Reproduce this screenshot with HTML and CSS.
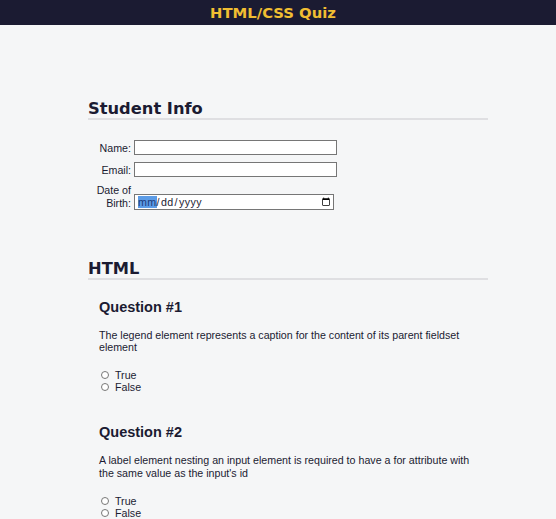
FILE: index.html
```html
<!DOCTYPE html>
<html lang="en">
<head>
<meta charset="utf-8">
<title>Accessibility Quiz</title>
<link rel="stylesheet" href="styles.css">
</head>
<body>
<header class="site-header">
  <h1 class="site-title">HTML/CSS Quiz</h1>
</header>
<main class="quiz">
  <section class="section">
    <h2 class="section-title">Student Info</h2>
    <div class="info">
      <div class="info-row">
        <label class="info-label" for="student-name">Name:</label>
        <input class="info-input" type="text" id="student-name">
      </div>
      <div class="info-row">
        <label class="info-label" for="student-email">Email:</label>
        <input class="info-input" type="email" id="student-email">
      </div>
      <div class="info-row">
        <label class="info-label" for="birth-date">Date of Birth:</label>
        <input class="info-input info-date" type="date" id="birth-date">
      </div>
    </div>
  </section>
  <section class="section section-html">
    <h2 class="section-title">HTML</h2>
    <div class="question">
      <h3 class="question-title">Question #1</h3>
      <p class="question-text">The legend element represents a caption for the content of its parent fieldset element</p>
      <ul class="answers">
        <li class="answer"><input class="radio" type="radio" name="q1" id="q1-a"><label for="q1-a">True</label></li>
        <li class="answer"><input class="radio" type="radio" name="q1" id="q1-b"><label for="q1-b">False</label></li>
      </ul>
    </div>
    <div class="question question-next">
      <h3 class="question-title">Question #2</h3>
      <p class="question-text">A label element nesting an input element is required to have a for attribute with the same value as the input's id</p>
      <ul class="answers">
        <li class="answer"><input class="radio" type="radio" name="q2" id="q2-a"><label for="q2-a">True</label></li>
        <li class="answer"><input class="radio" type="radio" name="q2" id="q2-b"><label for="q2-b">False</label></li>
      </ul>
    </div>
  </section>
</main>
</body>
</html>
```
FILE: styles.css
```css
html, body {
  margin: 0;
  padding: 0;
}

body {
  background: #f5f6f7;
  color: #1b1b32;
  font-family: "Liberation Sans", Arial, sans-serif;
  font-size: 10.67px;
}

.site-header {
  height: 25px;
  background-color: #1b1b32;
  padding-right: 10px;
  display: flex;
  align-items: center;
  justify-content: center;
}

.site-title {
  margin: 0;
  color: #f1be32;
  font-family: Verdana, "DejaVu Sans", sans-serif;
  font-size: 14.8px;
  line-height: 25px;
  font-weight: bold;
}

.quiz {
  padding-top: 74px;
}

.section {
  width: 400px;
  margin-left: 88px;
}

.section-html {
  margin-top: 49px;
}

.section-title {
  margin: 0;
  font-family: Verdana, "DejaVu Sans", sans-serif;
  font-size: 16.3px;
  line-height: 19px;
  font-weight: bold;
  border-bottom: 2px solid #dfdfe2;
}

.info {
  margin-top: 20px;
  padding-left: 3px;
  display: flex;
  flex-direction: column;
  gap: 7px;
}

.info-row {
  display: flex;
  align-items: flex-end;
}

.info-label {
  width: 40px;
  margin-right: 3px;
  text-align: right;
  line-height: 12.5px;
  padding-bottom: 1px;
}

.info-input {
  box-sizing: border-box;
  width: 203px;
  height: 15px;
  margin: 0;
  padding: 0 2px;
  border: 1px solid #767676;
  border-radius: 0;
  background: #fff;
  font-family: "Liberation Sans", Arial, sans-serif;
  font-size: 10.67px;
  color: #1b1b32;
}

.info-date {
  width: 200px;
  height: 16px;
  padding: 0 2px 0 2px;
  letter-spacing: 0.4px;
}

.info-date::-webkit-datetime-edit {
  padding: 0;
}

.info-date::-webkit-datetime-edit-month-field {
  padding: 0;
  margin-left: 1px;
  background-color: #5b9be6;
  color: #1b3a78;
}

.info-date::-webkit-calendar-picker-indicator {
  margin: 0;
  padding: 0;
  width: 10px;
  height: 10px;
}

.question {
  padding: 18.5px 10px 0 11px;
}

.question-next {
  padding-top: 31px;
}

.question-title {
  margin: 0;
  font-size: 14.5px;
  line-height: 17px;
  font-weight: bold;
}

.question-text {
  margin: 13px 0 0;
  line-height: 12.5px;
}

.answers {
  list-style: none;
  margin: 15.8px 0 0;
  padding: 0 0 0 2px;
}

.answer {
  display: flex;
  align-items: center;
  line-height: 12px;
  height: 12px;
}

.radio {
  width: 8px;
  height: 8px;
  margin: 0 6px 0 0;
}
```
